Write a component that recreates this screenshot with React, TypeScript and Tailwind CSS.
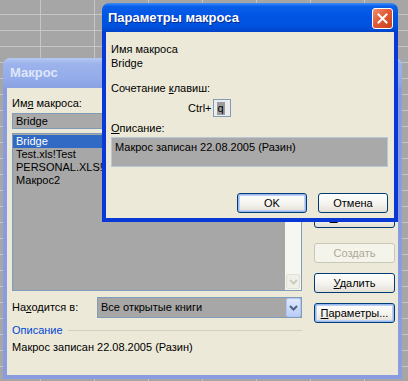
import React from "react";

const btn =
  "flex justify-center h-[20px] rounded-[3px] border border-[#003c74] bg-[linear-gradient(to_bottom,#ffffff_0%,#f4f3ee_55%,#e3e0d5_100%)] text-black";

const Button: React.FC<{ children: React.ReactNode; className?: string; disabled?: boolean; focused?: boolean }> = ({
  children,
  className = "items-center",
  disabled,
  focused,
}) => {
  if (disabled) {
    return (
      <div
        className={`flex items-center justify-center h-[20px] rounded-[3px] border border-[#c9c7ba] bg-[#f5f4ea] text-[#aca899] ${className}`}
      >
        {children}
      </div>
    );
  }
  return (
    <div
      className={`${btn} ${
        focused ? "shadow-[inset_0_0_0_1px_#98b8f0,inset_0_0_0_2px_#bcd0f5]" : ""
      } ${className}`}
    >
      {children}
    </div>
  );
};

const ChevronDown: React.FC<{ color: string }> = ({ color }) => (
  <svg width="9" height="6" viewBox="0 0 9 6">
    <path d="M1 1 L4.5 4.5 L8 1" fill="none" stroke={color} strokeWidth="2" />
  </svg>
);

export default function App() {
  return (
    <div className="relative w-[408px] h-[381px] overflow-hidden bg-[#a6a6a6] bg-[linear-gradient(to_right,#c6c6c6_1px,transparent_1px),linear-gradient(to_bottom,#c6c6c6_1px,transparent_1px)] bg-size-[54px_16px] bg-position-[40px_14px] font-['Liberation_Sans',Arial,sans-serif] text-[11px] text-black">
      {/* back window: Макрос (inactive) */}
      <div className="absolute left-[3px] top-[58px] w-[399px] h-[321px] flex flex-col">
        <div className="h-[30px] rounded-t-[7px] bg-[linear-gradient(to_bottom,#b6c8f2_0%,#9cb3ec_20%,#93abe9_70%,#8aa2e3_100%)] flex items-center px-[7px]">
          <span className="font-bold text-[13px] text-[#dfe7f9]">Макрос</span>
        </div>
        <div className="flex-1 bg-[#ece9d8] border-x-4 border-b-4 border-[#8a9ce0]">
          <div className="flex pl-[5px] pt-[9px]">
            <div className="w-[290px] flex flex-col">
              <div className="h-[13px] leading-[13px]">
                Им<span className="underline">я</span> макроса:
              </div>
              <div className="mt-[3px] h-[16px] border border-[#7f9db9] bg-[#a9a9a9] pl-[3px] leading-[14px]">Bridge</div>
              <div className="mt-[4px] h-[158px] border border-[#7f9db9] bg-[#a7a7a7] flex">
                <div className="flex-1 pt-[1px]">
                  <div className="h-[13px] leading-[13px] bg-[#316ac5] text-white pl-[3px]">Bridge</div>
                  <div className="h-[13px] leading-[13px] pl-[3px]">Test.xls!Test</div>
                  <div className="h-[13px] leading-[13px] pl-[3px]">PERSONAL.XLS!Macros</div>
                  <div className="h-[13px] leading-[13px] pl-[3px]">Макрос2</div>
                </div>
                <div className="w-[16px] bg-[#f7f7f2] flex flex-col justify-end">
                  <div className="h-[15px] m-[1px] rounded-[2px] border border-[#e2e0d6] bg-[#f1f0e8] flex items-center justify-center">
                    <ChevronDown color="#cdcbbe" />
                  </div>
                </div>
              </div>
              <div className="mt-[6px] h-[21px] flex items-center">
                <div className="w-[85px]">
                  На<span className="underline">х</span>одится в:
                </div>
                <div className="flex-1 h-full border border-[#7f9db9] bg-[#a7a7a7] flex items-center">
                  <div className="flex-1 pl-[3px]">Все открытые книги</div>
                  <div className="w-[15px] h-[19px] rounded-[2px] border border-[#b1c6f4] bg-[linear-gradient(to_bottom,#dfe8fc,#b9cdf7)] flex items-center justify-center">
                    <ChevronDown color="#4d6185" />
                  </div>
                </div>
              </div>
              <div className="mt-[6px] h-[12px] flex items-center">
                <span className="text-[#0046d5] leading-[12px]">Описание</span>
                <div className="flex-1 ml-[5px] h-px bg-[#d0d0bf]" />
              </div>
              <div className="mt-[5px] h-[12px] leading-[12px]">Макрос записан 22.08.2005 (Разин)</div>
            </div>
            <div className="ml-[12px] w-[81px] pt-[21px] flex flex-col gap-[10px]">
              <Button>Выполнить</Button>
              <Button>Отмена</Button>
              <Button>Войти</Button>
              <Button className="items-start">
                <span className="leading-[13px] underline-offset-[3px]">
                  <span className="underline">И</span>зменить
                </span>
              </Button>
              <Button disabled className="mt-[5px]">
                Создать
              </Button>
              <Button>
                <span>
                  <span className="underline">У</span>далить
                </span>
              </Button>
              <Button focused>
                <span>
                  <span className="underline">П</span>араметры...
                </span>
              </Button>
            </div>
          </div>
        </div>
      </div>

      {/* front window: Параметры макроса (active) */}
      <div className="absolute left-[102px] top-[3px] w-[296px] h-[219px] flex flex-col">
        <div className="h-[29px] rounded-t-[7px] bg-[linear-gradient(to_bottom,#3d8ef7_0%,#0a5fea_12%,#0054e3_45%,#0052df_80%,#0043c8_100%)] flex items-center pl-[6px] pr-[5px]">
          <span className="font-bold text-[13px] text-white [text-shadow:1px_1px_0_#0a2c8e]">Параметры макроса</span>
          <div className="ml-auto w-[21px] h-[21px] mt-[2px] rounded-[3px] border border-white bg-[linear-gradient(135deg,#f0916e_0%,#e25a36_45%,#c9401e_100%)] flex items-center justify-center">
            <svg width="11" height="11" viewBox="0 0 11 11">
              <path d="M1.5 1.5 L9.5 9.5 M9.5 1.5 L1.5 9.5" stroke="#ffffff" strokeWidth="2" strokeLinecap="square" />
            </svg>
          </div>
        </div>
        <div className="flex-1 bg-[#ece9d8] border-x-4 border-b-4 border-[#0838d5] flex flex-col pl-[5px] pt-[11px] pr-[6px]">
          <div className="h-[12px] leading-[12px]">Имя макроса</div>
          <div className="mt-[2px] h-[12px] leading-[12px]">Bridge</div>
          <div className="mt-[13px] h-[12px] leading-[12px]">
            Сочетание <span className="underline">к</span>лавиш:
          </div>
          <div className="mt-[5px] h-[18px] flex items-center pl-[77px]">
            <span>Ctrl+</span>
            <div className="ml-[1px] w-[18px] h-[18px] border border-[#7f9db9] bg-[#ececec] flex items-center pl-[3px]">
              <span className="bg-[#9c9c9c] leading-[13px] px-[1px]">q</span>
            </div>
          </div>
          <div className="mt-[5px] h-[12px] leading-[12px]">
            <span className="underline">О</span>писание:
          </div>
          <div className="mt-[3px] h-[30px] w-[277px] border border-[#b9c7d7] bg-[#a9a9a9] pl-[3px] pt-[3px] leading-[13px]">
            Макрос записан 22.08.2005 (Разин)
          </div>
          <div className="mt-[26px] flex justify-end gap-[11px]">
            <Button focused className="items-center w-[70px] h-[19px]">
              OK
            </Button>
            <Button className="items-center w-[70px] h-[19px]">Отмена</Button>
          </div>
        </div>
      </div>
    </div>
  );
}
